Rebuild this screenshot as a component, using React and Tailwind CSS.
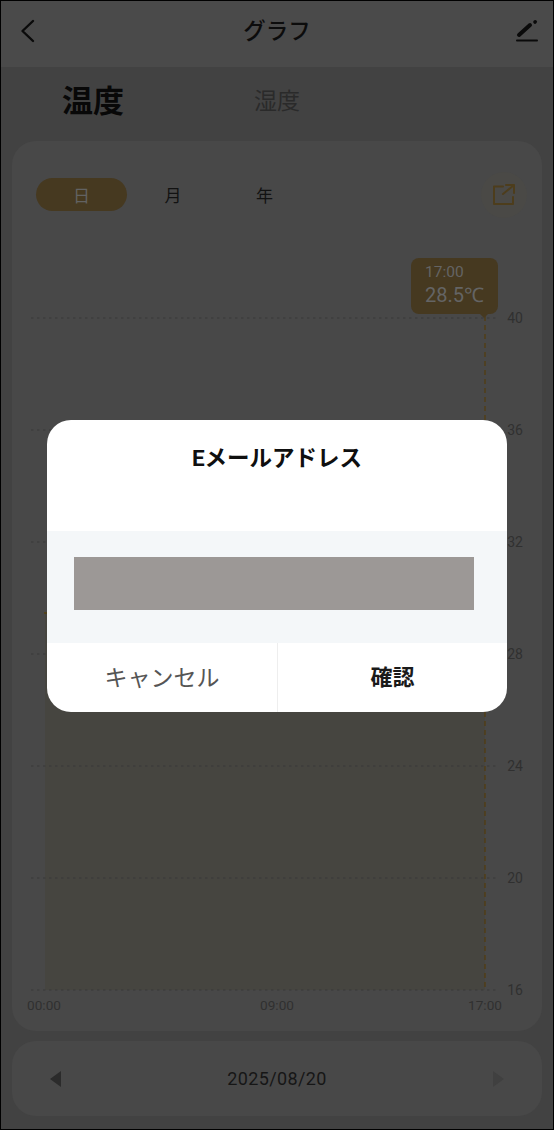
import React from 'react';

const jp = '[font-family:Roboto,"Noto_Sans_CJK_JP",sans-serif]';

const gridYs = [318, 430, 542, 654, 766, 878, 990];
const yLabels = ['40', '36', '32', '28', '24', '20', '16'];
const xLabels = [[44, '00:00'], [277, '09:00'], [485, '17:00']];

const Chart = () => (
    <svg className="mt-[19px] block" width="530" height="790" viewBox="12 230 530 790" style={{ fontFamily: 'Roboto, sans-serif' }}>
        <path d="M45 613 L485 613 L485 990 L45 990 Z" fill="#464540" />
        <path d="M44 613 L48 613" stroke="#54400f" strokeWidth="1.5" />
        {gridYs.map((y) => (
            <line key={y} x1="31" x2="497" y1={y} y2={y} stroke="#383838" strokeWidth="1" strokeDasharray="2.5 3.5" />
        ))}
        <line x1="485" x2="485" y1="316" y2="990" stroke="#523c10" strokeWidth="1.3" strokeDasharray="5 4" />
        {yLabels.map((label, i) => (
            <text key={label} x="515" y={gridYs[i] + 4.6} textAnchor="middle" fontSize="14" fill="#303030">{label}</text>
        ))}
        {xLabels.map(([x, label]) => (
            <text key={label} x={x} y="1010" textAnchor="middle" fontSize="13.6" fill="#303030">{label}</text>
        ))}
    </svg>
);

const App = () => {
    return (
        <div className={`relative box-border h-[1130px] w-[554px] overflow-hidden border border-black bg-[#424242] ${jp}`}>
            <div className="flex h-[66px] items-center justify-between bg-[#4a4a4a] pb-[6px] pl-[19px] pr-[15px]">
                <svg width="20" height="24" viewBox="0 0 20 24" fill="none" stroke="#0a0a0a" strokeWidth="2.4" strokeLinecap="round" strokeLinejoin="round">
                    <path d="M13 2 L2.5 12 L13 22" />
                </svg>
                <span className="text-[22.5px] font-medium leading-none text-[#0c0c0c]">グラフ</span>
                <svg width="24" height="24" viewBox="0 0 24 24" fill="none" stroke="#0a0a0a" strokeLinecap="round">
                    <path d="M5 16 L16 6" strokeWidth="4" />
                    <path d="M21 3 L21.2 2.8" strokeWidth="3.6" />
                    <path d="M3 21.6 L23 21.6" strokeWidth="2" />
                </svg>
            </div>

            <div className="flex h-[74px] items-center pb-[6px]">
                <div className="flex w-[184px] justify-center text-[31px] font-bold leading-none text-[#080808]">温度</div>
                <div className="flex w-[184px] justify-center text-[23px] leading-none text-[#2a2a2a]">湿度</div>
            </div>

            <div className="relative mx-[11px] h-[890px] rounded-[24px] bg-[#484848] pt-[37px]">
                <div className="flex h-[33px] items-center pl-[24px] pr-[15px] text-[17px] leading-none">
                    <div className="flex h-[33px] w-[91px] items-center justify-center rounded-full bg-[#463920] pt-[3px] text-[#626262]">日</div>
                    <div className="flex w-[92px] justify-center pt-[3px] text-[#121212]">月</div>
                    <div className="flex w-[91px] justify-center pt-[3px] text-[#121212]">年</div>
                    <div className="ml-auto flex h-[46px] w-[46px] items-center justify-center rounded-full bg-[#4a4946]">
                        <svg width="24" height="24" viewBox="0 0 24 24" fill="none" stroke="#4d3d1c" strokeWidth="2" strokeLinecap="round" strokeLinejoin="round">
                            <path d="M11 3.5 H2 V21 H21 V14" />
                            <path d="M11 11 L21.5 2.5" />
                            <path d="M14 2 H22 V10" />
                        </svg>
                    </div>
                </div>

                <Chart />

                <div className="absolute left-[399px] top-[117px] flex h-[56px] w-[87px] flex-col rounded-[8px] bg-[#463920] pl-[14px] pt-[6px] font-['Roboto'] text-[#646464]">
                    <span className="text-[15.5px] leading-[17px]">17:00</span>
                    <span className="mt-[1px] text-[20px] leading-[26px]">28.5℃</span>
                    <span className="absolute left-[68px] top-[55px] h-0 w-0 border-x-[5px] border-t-[5px] border-x-transparent border-t-[#463920]" />
                </div>
            </div>

            <div className="mx-[11px] mt-[10px] flex h-[75px] items-center justify-between rounded-[24px] bg-[#484848] px-[38px]">
                <span className="h-0 w-0 border-y-[8px] border-r-[11px] border-y-transparent border-r-[#2b2b2b]" />
                <span className="font-['Roboto'] text-[18px] leading-none tracking-[0.35px] text-[#161616]">2025/08/20</span>
                <span className="h-0 w-0 border-y-[8px] border-l-[11px] border-y-transparent border-l-[#404040]" />
            </div>

            <div className="absolute inset-0 flex items-center justify-center pt-[1px]">
                <div className="flex h-[292px] w-[460px] flex-col overflow-hidden rounded-[24px] bg-white">
                    <div className="flex h-[111px] justify-center pt-[25px] text-[22.5px] font-bold leading-[26px] text-[#0f0f0f]">Eメールアドレス</div>
                    <div className="h-[112px] bg-[#f4f7f9] pl-[27px] pt-[26px]">
                        <div className="h-[53px] w-[400px] bg-[#9c9896]" />
                    </div>
                    <div className="flex flex-1 pt-[2px]">
                        <div className="-mt-[2px] flex w-[231px] items-center justify-center border-r border-[#eeeeee] pt-[2px] text-[23px] leading-none text-[#555555]">キャンセル</div>
                        <div className="flex flex-1 items-center justify-center text-[22px] font-bold leading-none text-[#1a1a1a]">確認</div>
                    </div>
                </div>
            </div>
        </div>
    );
};

export default App;
